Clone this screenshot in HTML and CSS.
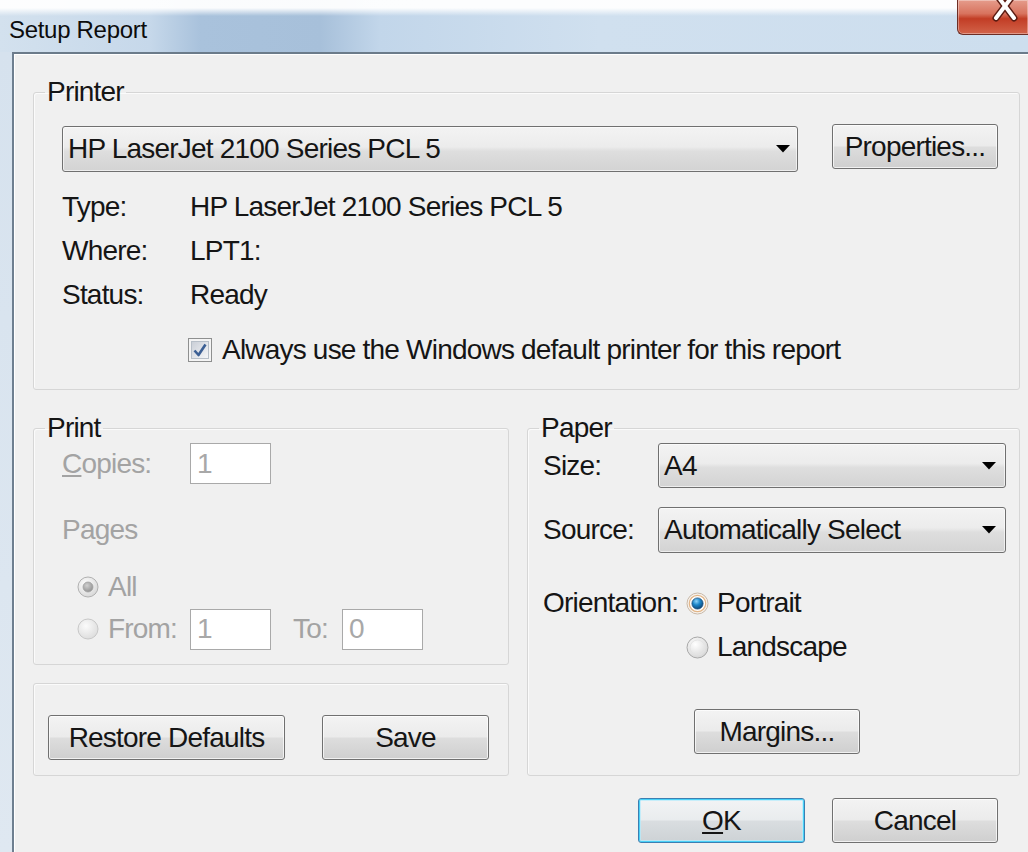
FILE: index.html
```html
<!DOCTYPE html>
<html lang="en">
<head>
<meta charset="utf-8">
<title>Setup Report</title>
<link rel="stylesheet" href="styles.css">
</head>
<body>
<div class="titlebar">
  <span class="title">Setup Report</span>
  <div class="close-btn">
    <svg width="30" height="26" viewBox="0 0 30 26">
      <path d="M6 -6 L24 18 M24 -6 L6 18" stroke="#5b1d14" stroke-width="7" stroke-linecap="round"/>
      <path d="M6 -6 L24 18 M24 -6 L6 18" stroke="#ffffff" stroke-width="4" stroke-linecap="round"/>
    </svg>
  </div>
</div>

<div class="frame">
  <div class="frame-edge"></div>
  <div class="client">

    <fieldset class="group">
      <legend>Printer</legend>
      <div class="group-body printer-body">
        <div class="printer-select">
          <div class="combo printer-combo">
            <span>HP LaserJet 2100 Series PCL 5</span>
            <svg class="arrow" width="14" height="8" viewBox="0 0 14 8"><path d="M0 0h14L7 7.5z" fill="#000"/></svg>
          </div>
          <div class="btn properties-btn">Properties...</div>
        </div>
        <div class="info-row first"><span class="info-label">Type:</span><span>HP LaserJet 2100 Series PCL 5</span></div>
        <div class="info-row"><span class="info-label">Where:</span><span>LPT1:</span></div>
        <div class="info-row"><span class="info-label">Status:</span><span>Ready</span></div>
        <div class="check-row">
          <svg class="checkbox" width="24" height="24" viewBox="0 0 24 24">
            <defs>
              <linearGradient id="cbFill" x1="0" y1="0" x2="1" y2="1">
                <stop offset="0" stop-color="#c9ced6"/>
                <stop offset="1" stop-color="#f6f7f9"/>
              </linearGradient>
            </defs>
            <rect x="0.5" y="0.5" width="23" height="23" fill="#f4f4f4" stroke="#8e8f8f"/>
            <rect x="3.5" y="3.5" width="17" height="17" fill="url(#cbFill)" stroke="#b7bfc8"/>
            <path d="M6.5 12.5 L10.5 17 L17.5 6.5" fill="none" stroke="#3b5f94" stroke-width="2.6" stroke-linejoin="round"/>
          </svg>
          <span>Always use the Windows default printer for this report</span>
        </div>
      </div>
    </fieldset>

    <div class="columns">
      <div class="col-left">
        <fieldset class="group print-group">
          <legend>Print</legend>
          <div class="group-body print-body">
            <div class="copies-row">
              <span class="field-label disabled"><u>C</u>opies:</span>
              <div class="textbox">1</div>
            </div>
            <div class="pages-row disabled">Pages</div>
            <div class="radio-row all-row">
              <svg class="radio" width="22" height="22" viewBox="0 0 22 22">
                <defs>
                  <radialGradient id="allFill" cx="0.4" cy="0.35" r="0.7">
                    <stop offset="0" stop-color="#ffffff"/>
                    <stop offset="1" stop-color="#d6d6d6"/>
                  </radialGradient>
                  <radialGradient id="allDot" cx="0.4" cy="0.35" r="0.7">
                    <stop offset="0" stop-color="#d0d0d0"/>
                    <stop offset="1" stop-color="#8f8f8f"/>
                  </radialGradient>
                </defs>
                <circle cx="11" cy="11" r="10" fill="url(#allFill)" stroke="#b1b1b1"/>
                <circle cx="11" cy="11" r="5" fill="url(#allDot)" stroke="#a2a2a2" stroke-width="0.8"/>
              </svg>
              <span class="disabled">All</span>
            </div>
            <div class="radio-row from-row">
              <svg class="radio" width="22" height="22" viewBox="0 0 22 22">
                <defs>
                  <radialGradient id="fromFill" cx="0.4" cy="0.35" r="0.7">
                    <stop offset="0" stop-color="#fbfbfb"/>
                    <stop offset="1" stop-color="#dcdcdc"/>
                  </radialGradient>
                </defs>
                <circle cx="11" cy="11" r="10" fill="url(#fromFill)" stroke="#c8c8c8"/>
              </svg>
              <span class="from-label disabled">From:</span>
              <div class="textbox">1</div>
              <span class="to-label disabled">To:</span>
              <div class="textbox">0</div>
            </div>
          </div>
        </fieldset>
        <div class="group actions-box">
          <div class="btn restore-btn">Restore Defaults</div>
          <div class="btn save-btn">Save</div>
        </div>
      </div>

      <fieldset class="group paper-group">
        <legend>Paper</legend>
        <div class="group-body paper-body">
          <div class="paper-row">
            <span class="paper-label">Size:</span>
            <div class="combo paper-combo">
              <span>A4</span>
              <svg class="arrow" width="14" height="8" viewBox="0 0 14 8"><path d="M0 0h14L7 7.5z" fill="#000"/></svg>
            </div>
          </div>
          <div class="paper-row source-row">
            <span class="paper-label">Source:</span>
            <div class="combo paper-combo">
              <span>Automatically Select</span>
              <svg class="arrow" width="14" height="8" viewBox="0 0 14 8"><path d="M0 0h14L7 7.5z" fill="#000"/></svg>
            </div>
          </div>
          <div class="orient-row">
            <span class="orient-label">Orientation:</span>
            <svg class="radio" width="23" height="23" viewBox="0 0 23 23">
              <defs>
                <radialGradient id="portraitDot" cx="0.4" cy="0.3" r="0.75">
                  <stop offset="0" stop-color="#8fd3f8"/>
                  <stop offset="0.45" stop-color="#1d86c9"/>
                  <stop offset="1" stop-color="#0b3f6f"/>
                </radialGradient>
              </defs>
              <circle cx="11.5" cy="11.5" r="10.5" fill="#f6f1ec" stroke="#c9b9a8"/>
              <circle cx="11.5" cy="11.5" r="8.2" fill="#ffffff" stroke="#e2b587" stroke-width="1.2"/>
              <circle cx="11.5" cy="11.5" r="5.6" fill="url(#portraitDot)" stroke="#20507c" stroke-width="0.8"/>
            </svg>
            <span>Portrait</span>
          </div>
          <div class="orient-row landscape-row">
            <svg class="radio" width="23" height="23" viewBox="0 0 23 23">
              <defs>
                <radialGradient id="landFill" cx="0.4" cy="0.35" r="0.75">
                  <stop offset="0" stop-color="#ffffff"/>
                  <stop offset="1" stop-color="#d2d2d2"/>
                </radialGradient>
              </defs>
              <circle cx="11.5" cy="11.5" r="10.5" fill="url(#landFill)" stroke="#a9a9a9"/>
              <circle cx="11.5" cy="11.5" r="7.5" fill="none" stroke="#e4e4e4" stroke-width="1"/>
            </svg>
            <span>Landscape</span>
          </div>
          <div class="margins-row">
            <div class="btn margins-btn">Margins...</div>
          </div>
        </div>
      </fieldset>
    </div>

    <div class="dialog-buttons">
      <div class="btn ok-btn"><u>O</u>K</div>
      <div class="btn cancel-btn">Cancel</div>
    </div>

  </div>
</div>
</body>
</html>
```

FILE: styles.css
```css
html, body {
  margin: 0;
  padding: 0;
  width: 1028px;
  height: 852px;
  overflow: hidden;
  background: #f0f0f0;
}

body {
  font-family: "Liberation Sans", Arial, sans-serif;
  font-size: 28px;
  letter-spacing: -0.8px;
  color: #151515;
}

/* ---------- caption bar ---------- */
.titlebar {
  height: 52px;
  display: flex;
  align-items: flex-start;
  padding-left: 9px;
  box-sizing: border-box;
  background:
    linear-gradient(to bottom, rgba(255,255,255,0.95) 0px, rgba(255,255,255,0.95) 8px, rgba(255,255,255,0) 16px),
    linear-gradient(to right, #d3e1ee 0px, #c6d8ea 150px, #a9c2dc 200px, #a7c0da 320px, #c2d6ea 380px, #d0e0ef 600px, #cddeee 1028px);
}

.title {
  font-size: 24px;
  letter-spacing: -0.3px;
  line-height: 28px;
  margin-top: 16px;
  color: #0c0c0c;
}

.close-btn {
  margin-left: auto;
  width: 71px;
  height: 35px;
  box-sizing: border-box;
  border: 1px solid #6d2d24;
  border-top: none;
  border-right: none;
  border-bottom-left-radius: 6px;
  background: linear-gradient(to bottom, #e59c8c 0%, #d8735e 40%, #c23d25 55%, #d2634a 100%);
  box-shadow: inset 0 0 0 1px rgba(255,255,255,0.35);
  display: flex;
  justify-content: flex-start;
  padding-left: 32px;
}

/* ---------- window frame ---------- */
.frame {
  display: flex;
  height: 800px;
}

.frame-edge {
  width: 12px;
  background: linear-gradient(to bottom, #d6e2ee, #dfe8f1);
}

.client {
  flex: 1;
  background: #f0f0f0;
  border-left: 2px solid #6e7f90;
  border-top: 2px solid #6b7b8a;
  padding: 23px 8px 0 19px;
  box-shadow: inset 1px 1px 0 #ffffff;
}

/* ---------- group boxes ---------- */
.group {
  margin: 0;
  padding: 0;
  border: 1px solid #d6d6d6;
  border-radius: 3px;
  box-shadow: inset 1px 1px 0 #fbfbfb;
  min-width: 0;
}

.group legend {
  margin-left: 11px;
  padding: 0 2px;
  line-height: 30px;
  color: #151515;
}

/* ---------- common controls ---------- */
.combo {
  box-sizing: border-box;
  border: 1px solid #707070;
  border-radius: 3px;
  background: linear-gradient(to bottom, #f3f3f3 0%, #ececec 45%, #dedede 55%, #d3d3d3 100%);
  box-shadow: inset 0 0 0 1px rgba(255,255,255,0.6);
  display: flex;
  align-items: center;
  justify-content: space-between;
  padding: 0 7px 0 5px;
  white-space: nowrap;
}

.btn {
  box-sizing: border-box;
  height: 45px;
  border: 1px solid #707070;
  border-radius: 3px;
  background: linear-gradient(to bottom, #f3f3f3 0%, #ebebeb 48%, #dddddd 52%, #cfcfcf 100%);
  box-shadow: inset 0 0 0 1px rgba(255,255,255,0.7);
  display: flex;
  align-items: center;
  justify-content: center;
  white-space: nowrap;
}

.textbox {
  box-sizing: border-box;
  width: 81px;
  height: 41px;
  background: #ffffff;
  border: 1px solid #a9a9a9;
  color: #a8a8a8;
  padding-left: 6px;
  display: flex;
  align-items: center;
}

.disabled {
  color: #a3a3a3;
}

.radio {
  flex: none;
}

/* ---------- printer group ---------- */
.printer-body {
  padding: 19px 0 17px 28px;
}

.printer-select {
  display: flex;
  align-items: flex-start;
}

.printer-combo {
  width: 736px;
  height: 46px;
}

.properties-btn {
  width: 166px;
  margin-left: 34px;
  margin-top: -2px;
}

.info-row {
  height: 44px;
  display: flex;
  align-items: center;
}

.info-row.first {
  margin-top: 13px;
}

.info-label {
  width: 128px;
}

.check-row {
  margin-top: 11px;
  height: 44px;
  padding-left: 126px;
  display: flex;
  align-items: center;
  gap: 10px;
}

/* ---------- lower columns ---------- */
.columns {
  display: flex;
  gap: 18px;
  margin-top: 23px;
}

.col-left {
  width: 476px;
  display: flex;
  flex-direction: column;
}

.print-body {
  padding: 0 0 14px 28px;
}

.copies-row {
  display: flex;
  align-items: center;
  height: 41px;
}

.field-label {
  width: 128px;
}

.pages-row {
  margin-top: 24px;
  height: 44px;
  display: flex;
  align-items: center;
}

.radio-row {
  display: flex;
  align-items: center;
  height: 42px;
  padding-left: 15px;
  gap: 9px;
}

.all-row {
  margin-top: 14px;
}

.from-label {
  width: 82px;
  margin-right: -9px;
}

.to-label {
  width: 49px;
  margin-left: 13px;
  margin-right: -9px;
}

.actions-box {
  margin-top: 18px;
  padding: 31px 0 15px 14px;
  display: flex;
  gap: 37px;
}

.restore-btn {
  width: 237px;
}

.save-btn {
  width: 167px;
}

/* ---------- paper group ---------- */
.paper-group {
  flex: 1;
}

.paper-body {
  padding: 0 13px 0 15px;
}

.paper-row {
  display: flex;
  align-items: center;
}

.paper-label {
  width: 115px;
  flex: none;
}

.paper-combo {
  flex: 1;
  height: 45px;
  padding-right: 9px;
}

.source-row {
  margin-top: 19px;
}

.source-row .paper-combo {
  height: 46px;
}

.orient-row {
  display: flex;
  align-items: center;
  height: 44px;
  gap: 8px;
  margin-top: 28px;
}

.orient-label {
  width: 135px;
  white-space: nowrap;
}

.landscape-row {
  margin-top: 0;
  padding-left: 143px;
}

.margins-row {
  margin-top: 40px;
  display: flex;
  padding-left: 151px;
}

.margins-btn {
  width: 166px;
}

/* ---------- dialog buttons ---------- */
.dialog-buttons {
  margin-top: 22px;
  display: flex;
  justify-content: flex-end;
  gap: 27px;
  padding-right: 22px;
}

.ok-btn {
  width: 167px;
  border-color: #3c7fb1;
  box-shadow: inset 0 0 0 1px #48d1f8, inset 0 0 0 2px rgba(180,235,252,0.7);
  background: linear-gradient(to bottom, #f2f4f5 0%, #e9ecee 48%, #d9dde0 52%, #cdd2d5 100%);
}

.cancel-btn {
  width: 166px;
}
```
